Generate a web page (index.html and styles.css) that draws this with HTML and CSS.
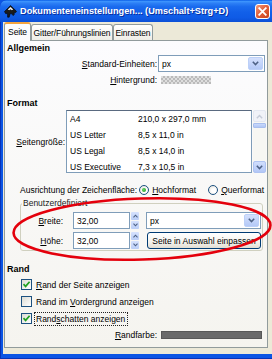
FILE: index.html
```html
<!DOCTYPE html>
<html>
<head>
<meta charset="utf-8">
<link rel="stylesheet" href="styles.css">
</head>
<body>
<div class="window">
  <div class="titlebar">
    <svg class="app-icon" width="13" height="13" viewBox="0 0 13 13">
      <path d="M6.5 0.5 L12.5 6.3 L11.6 7.6 L10.2 7.6 L10.2 9.6 L9.2 10.6 L8.2 9.6 L8.2 8.6 L6.2 8.6 L5.2 12.2 L3.6 12.2 L3.6 8.6 L1.6 8.6 L0.5 6.5 Z" fill="#1b1b1b" stroke="#000" stroke-width="0.6"/>
      <path d="M6.5 2 L9.2 4.5 L7.9 5.2 L6.5 4.3 L5.1 5.2 L3.8 4.5 Z" fill="#f2f2f2"/>
    </svg>
    <span class="title">Dokumenteneinstellungen... (Umschalt+Strg+D)</span>
    <div class="close">
      <svg width="9" height="9" viewBox="0 0 9 9"><path d="M1.2 1.2 L7.8 7.8 M7.8 1.2 L1.2 7.8" stroke="#fff" stroke-width="1.8" stroke-linecap="square"/></svg>
    </div>
  </div>
  <div class="client">
    <div class="tabs">
      <div class="tab active t-seite">Seite</div>
      <div class="tab t-gitter">Gitter/Führungslinien</div>
      <div class="tab t-einrasten">Einrasten</div>
    </div>
    <div class="panel">
      <div class="section s-allgemein">Allgemein</div>
      <div class="row r-units">
        <span class="lbl wide"><u>S</u>tandard-Einheiten:</span>
        <div class="combo w-units">
          <span class="combo-text">px</span>
          <span class="drop"><svg width="7" height="5" viewBox="0 0 7 5"><path d="M0.8 0.8 L3.5 3.6 L6.2 0.8" fill="none" stroke="#4d6185" stroke-width="1.5"/></svg></span>
        </div>
      </div>
      <div class="row r-bg">
        <span class="lbl wide"><u>H</u>intergrund:</span>
        <span class="checker"></span>
      </div>

      <div class="section s-format">Format</div>
      <div class="row r-size">
        <span class="lbl narrow"><u>S</u>eitengröße:</span>
        <div class="listbox">
          <div class="list-item"><span class="c-name">A4</span><span>210,0 x 297,0 mm</span></div>
          <div class="list-item"><span class="c-name">US Letter</span><span>8,5 x 11,0 in</span></div>
          <div class="list-item"><span class="c-name">US Legal</span><span>8,5 x 14,0 in</span></div>
          <div class="list-item"><span class="c-name">US Executive</span><span>7,3 x 10,5 in</span></div>
        </div>
        <div class="scrollbar">
          <span class="sb-btn sb-up"><svg width="7" height="5" viewBox="0 0 7 5"><path d="M0.8 4.2 L3.5 1.4 L6.2 4.2" fill="none" stroke="#c5cbd8" stroke-width="1.4"/></svg></span>
          <span class="sb-thumb"></span>
          <span class="sb-track"></span>
          <span class="sb-btn sb-down"><svg width="7" height="5" viewBox="0 0 7 5"><path d="M0.8 0.8 L3.5 3.6 L6.2 0.8" fill="none" stroke="#4d6185" stroke-width="1.5"/></svg></span>
        </div>
      </div>

      <div class="row r-orient">
        <span>Ausrichtung der Zeichenfläche:</span>
        <span class="radio checked"></span>
        <span class="radio-lbl"><u>H</u>ochformat</span>
        <span class="radio r-second"></span>
        <span class="radio-lbl"><u>Q</u>uerformat</span>
      </div>

      <fieldset class="group">
        <legend>Benutzerdefiniert</legend>
        <div class="grow">
          <span class="glbl"><u>B</u>reite:</span>
          <span class="entry">32,00</span>
          <span class="spin">
            <span class="spin-btn"><svg width="5" height="4" viewBox="0 0 5 4"><path d="M0.5 3.3 L2.5 1.2 L4.5 3.3" fill="none" stroke="#4d6185" stroke-width="1.1"/></svg></span>
            <span class="spin-btn"><svg width="5" height="4" viewBox="0 0 5 4"><path d="M0.5 0.7 L2.5 2.8 L4.5 0.7" fill="none" stroke="#4d6185" stroke-width="1.1"/></svg></span>
          </span>
          <div class="combo w-unit2">
            <span class="combo-text">px</span>
            <span class="drop"><svg width="7" height="5" viewBox="0 0 7 5"><path d="M0.8 0.8 L3.5 3.6 L6.2 0.8" fill="none" stroke="#4d6185" stroke-width="1.5"/></svg></span>
          </div>
        </div>
        <div class="grow g-second">
          <span class="glbl"><u>H</u>öhe:</span>
          <span class="entry">32,00</span>
          <span class="spin">
            <span class="spin-btn"><svg width="5" height="4" viewBox="0 0 5 4"><path d="M0.5 3.3 L2.5 1.2 L4.5 3.3" fill="none" stroke="#4d6185" stroke-width="1.1"/></svg></span>
            <span class="spin-btn"><svg width="5" height="4" viewBox="0 0 5 4"><path d="M0.5 0.7 L2.5 2.8 L4.5 0.7" fill="none" stroke="#4d6185" stroke-width="1.1"/></svg></span>
          </span>
          <span class="button">Seite in Auswahl einpassen</span>
        </div>
      </fieldset>

      <div class="section s-rand">Rand</div>
      <div class="check-row c-first">
        <span class="checkbox checked"><svg width="9" height="9" viewBox="0 0 9 9"><path d="M1.5 4.2 L3.6 6.4 L7.6 1.8" fill="none" stroke="#21a121" stroke-width="1.7"/></svg></span>
        <span class="check-lbl"><u>R</u>and der Seite anzeigen</span>
      </div>
      <div class="check-row">
        <span class="checkbox"></span>
        <span class="check-lbl">Rand im <u>V</u>ordergrund anzeigen</span>
      </div>
      <div class="check-row">
        <span class="checkbox checked"><svg width="9" height="9" viewBox="0 0 9 9"><path d="M1.5 4.2 L3.6 6.4 L7.6 1.8" fill="none" stroke="#21a121" stroke-width="1.7"/></svg></span>
        <span class="check-lbl focus">Rand<u>s</u>chatten anzeigen</span>
      </div>
      <div class="row r-color">
        <span class="lbl wide"><u>R</u>andfarbe:</span>
        <span class="color-swatch"></span>
      </div>
    </div>
  </div>
</div>
<svg class="annotation" width="272" height="359" viewBox="0 0 272 359">
  <ellipse cx="142" cy="229" rx="128.5" ry="30.5" transform="rotate(-1.8 142 229)" fill="none" stroke="#e4000c" stroke-width="2.6"/>
</svg>
</body>
</html>
```

FILE: styles.css
```css
* { box-sizing: border-box; }
html, body { margin: 0; padding: 0; }
body {
  width: 272px;
  height: 359px;
  overflow: hidden;
  position: relative;
  background: #0b55e4;
  font-family: "Liberation Sans", Arial, sans-serif;
  font-size: 8.5px;
  color: #000;
}
u { text-decoration: underline; text-underline-offset: 1px; }

.window {
  width: 277px;
  height: 359px;
  display: flex;
  flex-direction: column;
  background: #0b55e4;
  border-radius: 7px 7px 0 0;
  box-shadow: inset 1px 0 0 #0833b8, inset 0 -1px 0 #0833b8;
  overflow: hidden;
}

.titlebar {
  height: 22px;
  flex: none;
  display: flex;
  align-items: center;
  padding: 0 7px 0 4px;
  background: linear-gradient(#0a5ee8 0%, #3d94fd 7%, #2d80f6 14%, #1a6bee 30%, #1260e9 55%, #0f5be6 80%, #0b50d6 100%);
}
.app-icon { flex: none; }
.title {
  margin-left: 3px;
  color: #fff;
  font-weight: bold;
  font-size: 9.2px;
  text-shadow: 1px 1px 0 #0a2ea0;
  white-space: nowrap;
}
.close {
  margin-left: auto;
  width: 15px;
  height: 15px;
  border: 1px solid #fff;
  border-radius: 3px;
  background: linear-gradient(135deg, #f19a7c 0%, #e2613c 45%, #c8421a 100%);
  display: flex;
  align-items: center;
  justify-content: center;
}

.client {
  flex: 1;
  margin: 0 4px 5px 3px;
  padding-left: 1px;
  background: #ece9d8;
  display: flex;
  flex-direction: column;
}

.tabs {
  height: 18px;
  flex: none;
  display: flex;
  align-items: flex-end;
  position: relative;
  z-index: 2;
}
.tab {
  height: 16px;
  border: 1px solid #919b9c;
  border-bottom: none;
  border-radius: 3px 3px 0 0;
  background: linear-gradient(#ffffff, #eeede6);
  display: flex;
  align-items: center;
  justify-content: center;
  white-space: nowrap;
  padding-top: 1px;
  letter-spacing: -0.1px;
}
.tab.active {
  height: 19px;
  margin-bottom: -1px;
  background: #fcfcfe;
  border-top: 2px solid #f3a440;
  padding-top: 0;
  padding-bottom: 2px;
}
.t-seite { width: 27px; }
.t-gitter { width: 82px; }
.t-einrasten { width: 40px; }

.panel {
  width: 264px;
  height: 308px;
  flex: none;
  border: 1px solid #919b9c;
  background: linear-gradient(#fcfcfe, #f5f4ef);
  padding-left: 2px;
  display: flex;
  flex-direction: column;
}

.section {
  font-weight: bold;
  font-size: 9px;
  height: 11px;
  line-height: 11px;
  flex: none;
}
.s-allgemein { margin-top: 2px; }
.s-format { margin-top: 12px; }
.s-rand { margin-top: 13px; }

.row { display: flex; align-items: center; flex: none; }
.lbl { text-align: right; white-space: nowrap; flex: none; }
.lbl.wide { width: 151px; padding-right: 1px; }
.lbl.narrow { width: 59px; padding-right: 1px; }

.r-units { height: 17px; margin-top: 1px; }
.combo {
  height: 17px;
  border: 1px solid #7f9db9;
  background: #fff;
  display: flex;
  align-items: center;
  padding-left: 3px;
}
.w-units { width: 107px; }
.combo-text { flex: 1; }
.drop {
  width: 15px;
  height: 13px;
  margin-right: 1px;
  border: 1px solid #bcd0f8;
  border-radius: 2px;
  background: linear-gradient(#d4e0fd, #b4c9f7);
  display: flex;
  align-items: center;
  justify-content: center;
}

.r-bg { height: 12px; margin-top: 2px; }
.checker {
  margin-left: 3px;
  width: 50px;
  height: 8px;
  background-color: #d9d9d9;
  background-image: repeating-conic-gradient(#bababa 0% 25%, #dedede 0% 50%);
  background-size: 4px 4px;
}

.r-size { height: 63px; margin-top: 1px; align-items: stretch; }
.r-size .lbl { align-self: center; }
.listbox {
  width: 186px;
  border: 1px solid #7f9db9;
  border-top-color: #5a6a80;
  background: #fff;
  overflow: hidden;
}
.list-item {
  height: 16px;
  display: flex;
  align-items: center;
  padding-left: 3px;
  white-space: nowrap;
}
.c-name { width: 68px; flex: none; }
.scrollbar {
  width: 13px;
  margin-left: 1px;
  display: flex;
  flex-direction: column;
  background: #f7f7f3;
}
.sb-btn {
  height: 12px;
  flex: none;
  border-radius: 2px;
  display: flex;
  align-items: center;
  justify-content: center;
}
.sb-up { background: #f0f2f8; border: 1px solid #e3e7f1; }
.sb-down { background: linear-gradient(#d0defd, #b3c7f6); border: 1px solid #aec3f2; }
.sb-thumb {
  height: 5px;
  flex: none;
  margin-top: 1px;
  border-radius: 1px;
  background: linear-gradient(#c9d9fc, #b0c6f5);
  border: 1px solid #a9bfee;
}
.sb-track { flex: 1; }

.r-orient { height: 12px; margin-top: 11px; padding-left: 13px; white-space: nowrap; }
.radio {
  width: 10px;
  height: 10px;
  flex: none;
  border-radius: 50%;
  border: 1px solid #1c5180;
  background: radial-gradient(circle at 60% 60%, #ffffff 30%, #dedbd0 100%);
  margin-left: 2px;
  display: flex;
  align-items: center;
  justify-content: center;
}
.radio.checked::after {
  content: "";
  width: 4px;
  height: 4px;
  border-radius: 50%;
  background: radial-gradient(circle at 40% 40%, #5fd35f, #1f9a1f);
}
.radio-lbl { margin-left: 3px; }
.radio.r-second { margin-left: 12px; }

.group {
  margin: 2px 0 0 13px;
  width: 243px;
  padding: 4px 0 1px 0;
  border: 1px solid #d0d0bf;
  border-radius: 3px;
  flex: none;
}
.group legend {
  padding: 0 1px;
  margin-left: 1px;
  line-height: 10px;
  color: #222;
}
.grow { display: flex; align-items: center; height: 17px; }
.grow.g-second { margin-top: 3px; }
.glbl { width: 42px; text-align: right; flex: none; margin-right: 10px; }
.entry {
  width: 57px;
  height: 17px;
  border: 1px solid #7f9db9;
  background: #fff;
  padding-left: 3px;
  display: flex;
  align-items: center;
  flex: none;
}
.spin {
  width: 8px;
  height: 17px;
  margin-left: 1px;
  display: flex;
  flex-direction: column;
  gap: 1px;
  flex: none;
}
.spin-btn {
  flex: 1;
  border-radius: 1px;
  background: linear-gradient(#d6e2fd, #b9cdf7);
  display: flex;
  align-items: center;
  justify-content: center;
}
.w-unit2 { width: 115px; margin-left: 7px; }
.button {
  width: 114px;
  height: 17px;
  margin-left: 8px;
  border: 1px solid #003c74;
  border-radius: 3px;
  background: linear-gradient(#ffffff 0%, #f4f3ee 60%, #e2ddd2 100%);
  display: flex;
  align-items: center;
  justify-content: center;
  white-space: nowrap;
}

.check-row {
  display: flex;
  align-items: center;
  height: 13px;
  margin-top: 4px;
  padding-left: 14px;
  flex: none;
}
.check-row.c-first { margin-top: 3px; }
.checkbox {
  width: 11px;
  height: 11px;
  flex: none;
  border: 1px solid #1c5180;
  background: linear-gradient(135deg, #dcdcd4, #ffffff);
  display: flex;
  align-items: center;
  justify-content: center;
}
.check-lbl { margin-left: 3px; padding: 0 1px; white-space: nowrap; }
.check-lbl.focus { outline: 1px dotted #222; outline-offset: 0; padding: 1px 2px 1px 1px; }

.r-color { height: 10px; margin-top: 5px; }
.color-swatch {
  margin-left: 3px;
  width: 101px;
  height: 8px;
  background: #6a6a6a;
  border: 1px solid #585858;
}

.annotation {
  position: absolute;
  left: 0;
  top: 0;
  pointer-events: none;
}
```
